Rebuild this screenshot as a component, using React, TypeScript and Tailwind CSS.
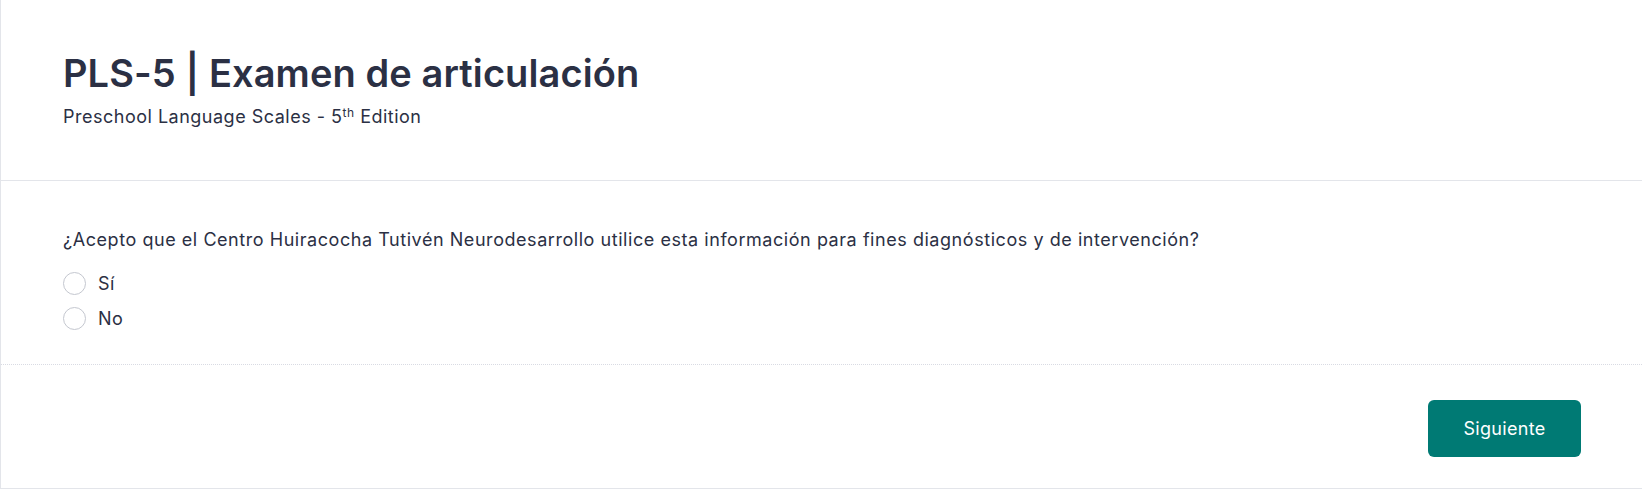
const font = { fontFamily: 'Inter, "Noto Sans", sans-serif' };

function Radio({ label }: { label: string }) {
    return (
        <label className="flex items-center gap-3 h-[35px] cursor-pointer">
            <span className="w-[23px] h-[23px] rounded-full border border-[#c4c7cf] bg-white" />
            <span className="text-[18px] tracking-[0.4px] text-[#2b3044]">{label}</span>
        </label>
    );
}

export default function App() {
    return (
        <div className="w-[1642px] h-[489px] bg-white" style={font}>
            <div className="flex flex-col h-[489px] border-l border-b border-[#e3e5ea]">
                <header className="h-[181px] border-b border-[#e3e5ea] pl-[62px] pr-[63px] pt-[52px]">
                    <h1 className="text-[38px] leading-[42px] font-semibold text-[#2b3044] tracking-[0.1px]">
                        PLS-5 | Examen de articulación
                    </h1>
                    <p className="mt-[11px] text-[18px] leading-[24px] tracking-[0.5px] text-[#2b3044]">
                        Preschool Language Scales - 5<sup className="text-[12px]">th</sup> Edition
                    </p>
                </header>

                <section className="h-[184px] border-b border-dotted border-[#d9dbe3] pl-[62px] pr-[63px] pt-[47px]">
                    <p className="text-[18px] leading-[24px] tracking-[0.55px] text-[#2b3044]">
                        ¿Acepto que el Centro Huiracocha Tutivén Neurodesarrollo utilice esta información para fines diagnósticos y de intervención?
                    </p>
                    <div className="mt-[14px] flex flex-col">
                        <Radio label="Sí" />
                        <Radio label="No" />
                    </div>
                </section>

                <footer className="flex-1 flex items-center justify-end pr-[61px] pt-[3px]">
                    <button className="w-[153px] h-[57px] rounded-md bg-[#007a74] text-white text-[18px] tracking-[0.3px]">
                        Siguiente
                    </button>
                </footer>
            </div>
        </div>
    );
}
